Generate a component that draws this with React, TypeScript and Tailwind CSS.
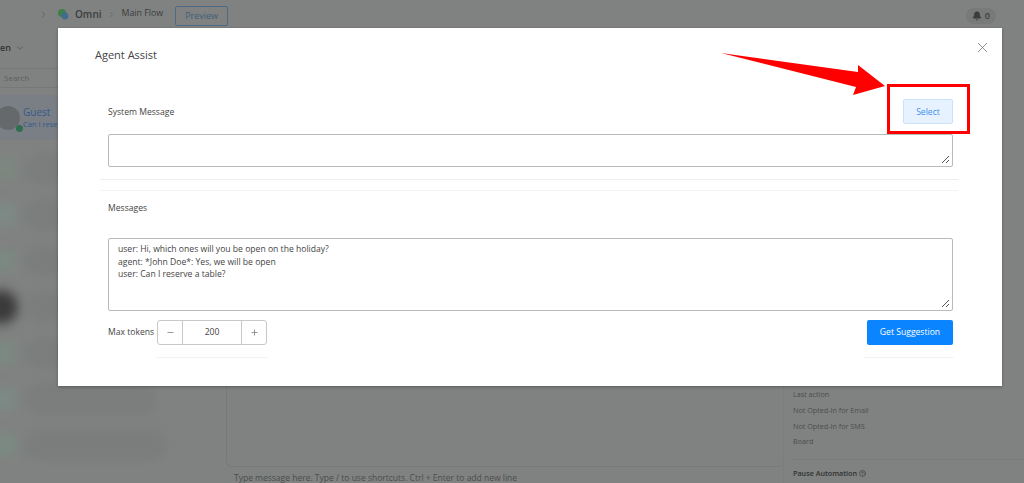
import { Bell, ChevronDown, ChevronRight, CircleHelp, Minus, Plus, X } from "lucide-react";

const rows = [
  { h: "h-[44px]", w: "w-[150px]", dot: "ml-[-8px] size-[26px] blur-[5px] bg-[#7c8780]" },
  { h: "h-[40px]", w: "w-[170px]", dot: "ml-[-8px] size-[26px] blur-[5px] bg-[#7d8984]" },
  { h: "h-[44px]", w: "w-[160px]", dot: "ml-[-8px] size-[26px] blur-[5px] bg-[#7b8881]" },
  { h: "h-[40px]", w: "w-[180px]", dot: "ml-[-16px] size-[34px] blur-[6px] bg-[#3a3a3a]" },
  { h: "h-[44px]", w: "w-[150px]", dot: "ml-[-8px] size-[26px] blur-[5px] bg-[#7b8881]" },
  { h: "h-[40px]", w: "w-[130px]", dot: "ml-[-8px] size-[26px] blur-[5px] bg-[#7c8985]" },
  { h: "h-[44px]", w: "w-[140px]", dot: "ml-[-8px] size-[26px] blur-[5px] bg-[#7b8982]" },
];

const sideLabels = ["Last action", "Not Opted-In for Email", "Not Opted-In for SMS", "Board"];

const ResizeHandle = () => (
  <svg width="9" height="9" viewBox="0 0 9 9" className="absolute bottom-[2px] right-[2px]">
    <path d="M1 8 8 1M5 8 8 5" stroke="#555" strokeWidth="1" fill="none" />
  </svg>
);

const App = () => {
  return (
    <div className="relative h-[483px] w-[1024px] overflow-hidden bg-[#808281] font-['Open_Sans',sans-serif] text-[#333]">
      {/* page behind the backdrop */}
      <div className="flex h-[28px] items-center pl-[38px] text-[#3a3d3f]">
        <ChevronRight size={11} className="text-[#5f6264]" />
        <svg width="12" height="12" viewBox="0 0 12 12" className="ml-[8px]">
          <circle cx="5" cy="5" r="4" fill="#3e7f4c" />
          <circle cx="8" cy="8" r="3.4" fill="#3f6c8f" />
        </svg>
        <span className="ml-[6px] text-[10px] font-semibold">Omni</span>
        <ChevronRight size={9} className="ml-[5px] text-[#5f6264]" />
        <span className="ml-[6px] text-[8.8px]">Main Flow</span>
        <div className="ml-[12px] mt-[4px] flex h-[20px] w-[53px] items-center justify-center rounded-[2px] border border-[#4d6b84] text-[9px] text-[#3f5f7c]">
          Preview
        </div>
        <div className="ml-auto mr-[28px] mt-[4px] flex h-[16px] items-center gap-[3px] rounded-full bg-[#777a79] px-[6px] text-[9px] font-semibold">
          <Bell size={10} fill="#3a3d3f" />
          0
        </div>
      </div>

      <div className="flex">
        <div className="h-[455px] w-[226px]">
          <div className="flex h-[40px] items-center text-[9px] font-semibold text-[#333]">
            en
            <ChevronDown size={10} className="ml-[4px] text-[#555]" />
          </div>
          <div className="flex h-[20px] items-center border-y border-[#767877] pl-[4px] text-[8px] text-[#5c5f5e]">
            Search
          </div>
          <div className="mt-[7px] flex h-[45px] items-center bg-[#7a7f85]">
            <div className="relative ml-[-4px] size-[24px] rounded-full bg-[#66696b]">
              <div className="absolute bottom-[-2px] right-[-3px] size-[7px] rounded-full bg-[#2f6f50]" />
            </div>
            <div className="ml-[3px]">
              <div className="text-[10px] leading-[13px] text-[#33598a]">Guest</div>
              <div className="text-[7.5px] leading-[11px] text-[#33598a]">Can I reserve</div>
            </div>
          </div>
          <div className="flex flex-col gap-[4px] pt-[7px]">
            {rows.map((row, i) => (
              <div key={i} className={`flex items-center ${row.h}`}>
                <div className={`shrink-0 rounded-full ${row.dot}`} />
                <div className={`ml-[8px] h-[30px] rounded-full bg-[#7a7d7c] blur-[5px] ${row.w}`} />
              </div>
            ))}
          </div>
        </div>

        <div className="flex h-[455px] flex-1 flex-col">
          <div className="h-[442px] rounded-b-[6px] border-b border-l border-[#787a79]" />
          <div className="whitespace-nowrap pl-[8px] pt-[6px] text-[8.5px] leading-[10px] text-[#4a4d4e]">
            Type message here. Type / to use shortcuts. Ctrl + Enter to add new line
          </div>
        </div>

        <div className="flex w-[241px] flex-col gap-[5px] border-l border-[#7c7e7d] pl-[9px] pt-[361px] text-[7.2px] text-[#4a4d4e]">
          {sideLabels.map((label) => (
            <div key={label}>{label}</div>
          ))}
          <div className="mt-[7px] border-t border-[#7a7c7b] pt-[8px]">
            <div className="flex items-center gap-[2px] font-semibold text-[#2f3233]">
              Pause Automation
              <CircleHelp size={7} />
            </div>
          </div>
        </div>
      </div>

      {/* modal */}
      <div className="absolute left-[58px] top-[28px] flex h-[358px] w-[944px] flex-col bg-white shadow-[0_1px_3px_rgba(0,0,0,0.3)]">
        <div className="flex items-start justify-between pl-[37px] pr-[11px] pt-[18px]">
          <h2 className="text-[11px] leading-[17px] text-[#444]">Agent Assist</h2>
          <X size={17} strokeWidth={1} className="mt-[-7px] text-[#666]" />
        </div>

        <div className="mt-[36px] flex h-[25px] items-center justify-between pl-[50px] pr-[49px]">
          <span className="mt-[2px] text-[8.6px] text-[#444]">System Message</span>
          <button className="h-[25px] w-[50px] rounded-[2px] border border-[#c9e1fb] bg-[#e6f2ff] pt-[1px] text-[8.6px] text-[#3f8fe8]">
            Select
          </button>
        </div>
        <div className="relative ml-[50px] mt-[10px] h-[33px] w-[845px] rounded-[2px] border border-[#b9b9b9] bg-white">
          <ResizeHandle />
        </div>
        <div className="ml-[42px] mt-[12px] w-[858px] border-t border-[#eeeeee]" />
        <div className="ml-[42px] mt-[10px] w-[858px] border-t border-[#f4f4f4]" />

        <span className="ml-[50px] mt-[11px] text-[8.6px] leading-[12px] text-[#444]">Messages</span>
        <div className="relative ml-[50px] mt-[24px] h-[73px] w-[845px] rounded-[2px] border border-[#b9b9b9] bg-white px-[9px] pt-[4px] text-[8.6px] leading-[12.6px] text-[#444]">
          <div>user: Hi, which ones will you be open on the holiday?</div>
          <div>agent: *John Doe*: Yes, we will be open</div>
          <div>user: Can I reserve a table?</div>
          <ResizeHandle />
        </div>

        <div className="ml-[50px] mt-[9px] flex w-[845px] items-center">
          <span className="w-[49px] whitespace-nowrap text-[8.6px] text-[#444]">Max tokens</span>
          <div className="flex h-[25px] w-[110px] items-stretch rounded-[3px] border border-[#c8c8c8] text-[#777]">
            <div className="flex w-[25px] items-center justify-center border-r border-[#c8c8c8]">
              <Minus size={9} />
            </div>
            <div className="flex flex-1 items-center justify-center text-[8.6px] text-[#444]">200</div>
            <div className="flex w-[25px] items-center justify-center border-l border-[#c8c8c8]">
              <Plus size={9} />
            </div>
          </div>
          <button className="ml-auto h-[25px] w-[86px] rounded-[2px] bg-[#0a84ff] text-[8.6px] font-medium text-white">
            Get Suggestion
          </button>
        </div>
        <div className="ml-[98px] mt-[12px] flex w-[798px] justify-between">
          <div className="w-[112px] border-t border-[#f3f3f3]" />
          <div className="w-[90px] border-t border-[#f3f3f3]" />
        </div>
      </div>

      {/* annotation on top of the screenshot */}
      <svg width="170" height="50" viewBox="0 0 170 50" className="absolute left-[720px] top-[50px]">
        <polygon points="1,3 138,22 138,15 165,36 133,45 136,37" fill="#ff0000" />
      </svg>
      <div className="absolute left-[887px] top-[84px] h-[50px] w-[83px] border-[3px] border-[#ff0000]" />
    </div>
  );
};

export default App;
